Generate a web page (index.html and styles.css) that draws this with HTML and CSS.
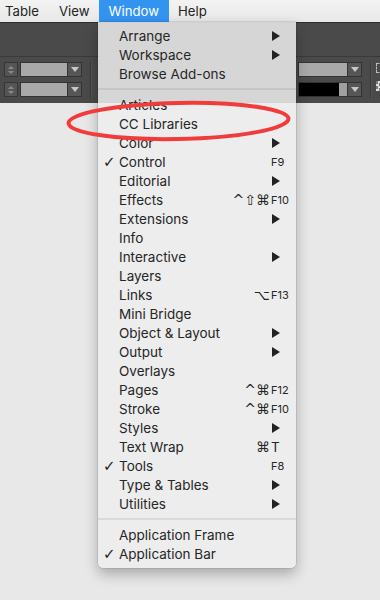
FILE: index.html
```html
<!DOCTYPE html>
<html>
<head>
<meta charset="utf-8">
<link rel="stylesheet" href="styles.css">
</head>
<body>
<div class="menubar">
  <span class="mb-item mb-table">Table</span>
  <span class="mb-item mb-view">View</span>
  <span class="mb-item mb-window active">Window</span>
  <span class="mb-item mb-help">Help</span>
</div>
<div class="toolbar">
  <div class="tb-top"></div>
  <div class="tb-controls">
    <div class="tb-group">
      <div class="ctl-row">
        <span class="stepper"><i class="up"></i><i class="dn"></i></span>
        <span class="dd"><span class="dd-field"></span><span class="dd-btn"><i></i></span></span>
      </div>
      <div class="ctl-row">
        <span class="stepper"><i class="up"></i><i class="dn"></i></span>
        <span class="dd"><span class="dd-field"></span><span class="dd-btn"><i></i></span></span>
      </div>
    </div>
    <div class="vdiv"></div>
    <div class="tb-spacer"></div>
    <div class="tb-group right">
      <div class="ctl-row">
        <span class="dd wide"><span class="dd-field"></span><span class="dd-btn"><i></i></span></span>
      </div>
      <div class="ctl-row">
        <span class="dd wide"><span class="dd-field black"></span><span class="dd-btn"><i></i></span></span>
      </div>
    </div>
    <div class="vdiv r"></div>
    <div class="tb-icons">
      <span class="ico-frame"></span>
      <span class="ico-check"></span>
    </div>
  </div>
</div>
<div class="workspace"></div>

<div class="menu">
  <div class="item"><span class="chk"></span><span class="lbl">Arrange</span><span class="mod"></span><span class="key"><svg class="arr" width="8" height="10" viewBox="0 0 8 10"><polygon points="0,0 8,5 0,10"/></svg></span></div>
  <div class="item"><span class="chk"></span><span class="lbl">Workspace</span><span class="mod"></span><span class="key"><svg class="arr" width="8" height="10" viewBox="0 0 8 10"><polygon points="0,0 8,5 0,10"/></svg></span></div>
  <div class="item"><span class="chk"></span><span class="lbl">Browse Add-ons</span><span class="mod"></span><span class="key"></span></div>
  <div class="sep"></div>
  <div class="item"><span class="chk"></span><span class="lbl">Articles</span><span class="mod"></span><span class="key"></span></div>
  <div class="item"><span class="chk"></span><span class="lbl">CC Libraries</span><span class="mod"></span><span class="key"></span></div>
  <div class="item"><span class="chk"></span><span class="lbl">Color</span><span class="mod"></span><span class="key"><svg class="arr" width="8" height="10" viewBox="0 0 8 10"><polygon points="0,0 8,5 0,10"/></svg></span></div>
  <div class="item"><span class="chk">✓</span><span class="lbl">Control</span><span class="mod"></span><span class="key fk">F9</span></div>
  <div class="item"><span class="chk"></span><span class="lbl">Editorial</span><span class="mod"></span><span class="key"><svg class="arr" width="8" height="10" viewBox="0 0 8 10"><polygon points="0,0 8,5 0,10"/></svg></span></div>
  <div class="item"><span class="chk"></span><span class="lbl">Effects</span><span class="mod">^⇧⌘</span><span class="key fk">F10</span></div>
  <div class="item"><span class="chk"></span><span class="lbl">Extensions</span><span class="mod"></span><span class="key"><svg class="arr" width="8" height="10" viewBox="0 0 8 10"><polygon points="0,0 8,5 0,10"/></svg></span></div>
  <div class="item"><span class="chk"></span><span class="lbl">Info</span><span class="mod"></span><span class="key"></span></div>
  <div class="item"><span class="chk"></span><span class="lbl">Interactive</span><span class="mod"></span><span class="key"><svg class="arr" width="8" height="10" viewBox="0 0 8 10"><polygon points="0,0 8,5 0,10"/></svg></span></div>
  <div class="item"><span class="chk"></span><span class="lbl">Layers</span><span class="mod"></span><span class="key"></span></div>
  <div class="item"><span class="chk"></span><span class="lbl">Links</span><span class="mod">⌥</span><span class="key fk">F13</span></div>
  <div class="item"><span class="chk"></span><span class="lbl">Mini Bridge</span><span class="mod"></span><span class="key"></span></div>
  <div class="item"><span class="chk"></span><span class="lbl">Object &amp; Layout</span><span class="mod"></span><span class="key"><svg class="arr" width="8" height="10" viewBox="0 0 8 10"><polygon points="0,0 8,5 0,10"/></svg></span></div>
  <div class="item"><span class="chk"></span><span class="lbl">Output</span><span class="mod"></span><span class="key"><svg class="arr" width="8" height="10" viewBox="0 0 8 10"><polygon points="0,0 8,5 0,10"/></svg></span></div>
  <div class="item"><span class="chk"></span><span class="lbl">Overlays</span><span class="mod"></span><span class="key"></span></div>
  <div class="item"><span class="chk"></span><span class="lbl">Pages</span><span class="mod">^⌘</span><span class="key fk">F12</span></div>
  <div class="item"><span class="chk"></span><span class="lbl">Stroke</span><span class="mod">^⌘</span><span class="key fk">F10</span></div>
  <div class="item"><span class="chk"></span><span class="lbl">Styles</span><span class="mod"></span><span class="key"><svg class="arr" width="8" height="10" viewBox="0 0 8 10"><polygon points="0,0 8,5 0,10"/></svg></span></div>
  <div class="item"><span class="chk"></span><span class="lbl">Text Wrap</span><span class="mod">⌘</span><span class="key">T</span></div>
  <div class="item"><span class="chk">✓</span><span class="lbl">Tools</span><span class="mod"></span><span class="key fk">F8</span></div>
  <div class="item"><span class="chk"></span><span class="lbl">Type &amp; Tables</span><span class="mod"></span><span class="key"><svg class="arr" width="8" height="10" viewBox="0 0 8 10"><polygon points="0,0 8,5 0,10"/></svg></span></div>
  <div class="item"><span class="chk"></span><span class="lbl">Utilities</span><span class="mod"></span><span class="key"><svg class="arr" width="8" height="10" viewBox="0 0 8 10"><polygon points="0,0 8,5 0,10"/></svg></span></div>
  <div class="sep"></div>
  <div class="item"><span class="chk"></span><span class="lbl">Application Frame</span><span class="mod"></span><span class="key"></span></div>
  <div class="item"><span class="chk">✓</span><span class="lbl">Application Bar</span><span class="mod"></span><span class="key"></span></div>
</div>

<svg class="annot" width="380" height="600" viewBox="0 0 380 600">
  <ellipse cx="178.5" cy="121" rx="110" ry="18" transform="rotate(-1.2 178.5 121)" fill="none" stroke="#f23c3c" stroke-width="4"/>
</svg>
</body>
</html>
```
FILE: styles.css
```css
html, body {
  margin: 0;
  padding: 0;
}
body {
  width: 380px;
  height: 600px;
  overflow: hidden;
  position: relative;
  background: #e8e8e8;
  font-family: Inter, "Noto Sans", sans-serif;
  display: flex;
  flex-direction: column;
}
.menubar {
  height: 22px;
  flex: none;
  display: flex;
  align-items: stretch;
  background: linear-gradient(#f3f3f3, #e8e8e8);
  font-size: 13.2px;
  color: #232323;
  box-sizing: border-box;
}
.mb-item {
  display: flex;
  align-items: center;
  padding: 0 10px;
  line-height: 22px;
}
.mb-table { padding-left: 5px; }
.mb-window { padding-left: 9px; }
.mb-help { padding-left: 9px; }
.active {
  background: #3394f0;
  color: #fff;
}
.toolbar {
  height: 81px;
  flex: none;
  background: #4a4a4a;
  border-top: 1px solid #2c2c2c;
  box-sizing: border-box;
  display: flex;
  flex-direction: column;
}
.tb-top {
  height: 33px;
  border-bottom: 1px solid #3a3a3a;
}
.tb-controls {
  flex: 1;
  display: flex;
  padding: 5px 0 0 4px;
  box-sizing: border-box;
}
.tb-group {
  display: flex;
  flex-direction: column;
  gap: 5px;
  flex: none;
}
.ctl-row {
  display: flex;
  gap: 2px;
  height: 15px;
}
.stepper {
  width: 14px;
  height: 15px;
  box-sizing: border-box;
  border: 1px solid #353535;
  background: #555;
  display: flex;
  flex-direction: column;
  align-items: center;
  justify-content: center;
  gap: 2px;
}
.stepper i {
  width: 0;
  height: 0;
  border-left: 3px solid transparent;
  border-right: 3px solid transparent;
}
.stepper .up { border-bottom: 3px solid #8a8a8a; }
.stepper .dn { border-top: 3px solid #8a8a8a; }
.dd {
  display: flex;
  width: 62px;
  height: 15px;
  box-sizing: border-box;
  border: 1px solid #333;
  background: #333;
  gap: 1px;
}
.dd.wide { width: 64px; }
.dd-field {
  flex: 1;
  background: #a9a9a9;
}
.dd-field.black {
  background: linear-gradient(90deg, #000 0, #000 84%, #a0a0a0 84%);
}
.dd-btn {
  width: 13px;
  background: #565656;
  display: flex;
  align-items: center;
  justify-content: center;
}
.dd-btn i {
  width: 0;
  height: 0;
  border-left: 4px solid transparent;
  border-right: 4px solid transparent;
  border-top: 5px solid #c8c8c8;
}
.vdiv {
  width: 1px;
  flex: none;
  background: #3a3a3a;
  margin: 0 0 5px 8px;
  box-shadow: 1px 0 0 #555;
}
.vdiv.r { margin-left: 8px; }
.tb-spacer { flex: 1; }
.tb-icons {
  display: flex;
  flex-direction: column;
  gap: 8px;
  margin-left: 5px;
  margin-right: -6px;
  padding-top: 1px;
  flex: none;
}
.ico-frame {
  width: 10px;
  height: 10px;
  border: 1px dashed #bbb;
  box-sizing: border-box;
}
.ico-check {
  width: 10px;
  height: 10px;
  background: repeating-conic-gradient(#ddd 0 25%, #777 0 50%) 0 0 / 5px 5px;
}
.workspace {
  flex: 1;
  background: #e8e8e8;
}
.menu {
  position: absolute;
  left: 98px;
  top: 22px;
  width: 198px;
  padding: 4px 0 5px;
  box-sizing: border-box;
  background: rgba(237, 237, 237, 0.86);
  border-radius: 0 0 5px 5px;
  box-shadow: 0 6px 14px rgba(0, 0, 0, 0.28), 0 0 0 0.5px rgba(0, 0, 0, 0.15);
  font-size: 13.5px;
  color: #262626;
}
.item {
  display: flex;
  align-items: center;
  height: 19px;
  padding-right: 7px;
  white-space: nowrap;
}
.chk {
  width: 21px;
  box-sizing: border-box;
  padding-left: 5px;
  font-family: "DejaVu Sans", sans-serif;
  font-size: 15px;
  flex: none;
}
.lbl {
  flex: 1;
}
.mod {
  font-family: "DejaVu Sans", sans-serif;
  font-size: 14px;
  text-align: right;
  padding-right: 1px;
}
.key {
  width: 18px;
  flex: none;
  display: flex;
  align-items: center;
}
.key.fk {
  font-size: 11px;
}
.arr {
  display: block;
  margin-left: 1px;
  fill: #222;
}
.sep {
  height: 12px;
  display: flex;
  align-items: center;
}
.sep::before {
  content: "";
  flex: 1;
  height: 2px;
  background: rgba(0, 0, 0, 0.08);
}
.annot {
  position: absolute;
  left: 0;
  top: 0;
  pointer-events: none;
}
```
